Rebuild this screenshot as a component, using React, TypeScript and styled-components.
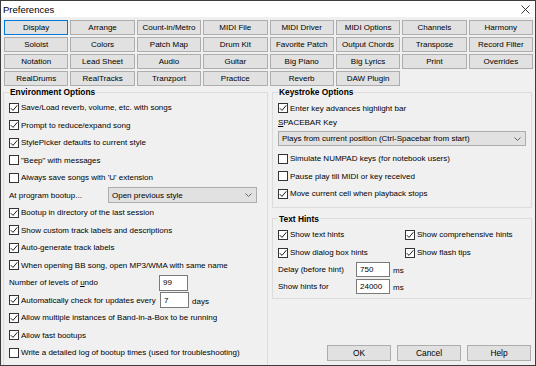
import React from "react";
import styled, { createGlobalStyle } from "styled-components";

const Global = createGlobalStyle`
  html, body { margin: 0; padding: 0; background: #ffffff; }
  body { font-family: "Liberation Sans", Arial, sans-serif; }
  * { box-sizing: border-box; }
`;

const Window = styled.div`
  width: 536px;
  height: 366px;
  border: 1px solid #3c3c3c;
  background: #f0f0f0;
  display: flex;
  flex-direction: column;
  overflow: hidden;
  font-size: 8px;
  color: #000;
`;

const TitleBar = styled.div`
  height: 16px;
  flex: none;
  background: #ffffff;
  display: flex;
  align-items: center;
  justify-content: space-between;
  padding: 0 5px 0 2px;
`;

const Title = styled.span`
  font-size: 9.5px;
`;

const Close = styled.svg`
  width: 9px;
  height: 9px;
  display: block;
`;

const TabGrid = styled.div`
  flex: none;
  margin-top: 3px;
  padding: 0 2px 0 3px;
  display: grid;
  grid-template-columns: repeat(8, 1fr);
  grid-auto-rows: 15px;
  gap: 2px;
`;

const TabButton = styled.div<{ $default?: boolean }>`
  background: #e1e1e1;
  border: 1px solid ${(p) => (p.$default ? "#0078d7" : "#adadad")};
  display: flex;
  align-items: center;
  justify-content: center;
  white-space: nowrap;
  font-size: 8px;
`;

const Main = styled.div`
  flex: 1;
  display: grid;
  grid-template-columns: 265px 260px;
  column-gap: 4px;
  padding: 1px 0 3px 2px;
  min-height: 0;
`;

const Column = styled.div`
  display: flex;
  flex-direction: column;
  min-height: 0;
`;

const Group = styled.fieldset<{ $gapBelow?: number }>`
  margin: 0 0 ${(p) => p.$gapBelow ?? 0}px 0;
  padding: 2px 4px 4px 5px;
  border: 1px solid #dcdcdc;
  min-width: 0;
`;

const GroupTitle = styled.legend`
  font-weight: bold;
  font-size: 8.4px;
  line-height: 10px;
  padding: 0 1px;
  margin-left: 0;
`;

const CheckRow = styled.div<{ $h?: number }>`
  height: ${(p) => p.$h ?? 17.5}px;
  display: flex;
  align-items: center;
  white-space: nowrap;
`;

const BoxWrap = styled.span<{ $checked?: boolean }>`
  width: 10px;
  height: 10px;
  flex: none;
  border: 1px solid #333333;
  background: #ffffff;
  margin-right: 2px;
  display: flex;
  align-items: center;
  justify-content: center;
`;

const FieldRow = styled.div<{ $h?: number; $mt?: number }>`
  height: ${(p) => p.$h ?? 17.5}px;
  margin-top: ${(p) => p.$mt ?? 0}px;
  display: flex;
  align-items: center;
  white-space: nowrap;
`;

const FixedLabel = styled.span<{ $w: number }>`
  width: ${(p) => p.$w}px;
  flex: none;
  display: flex;
  align-items: center;
  overflow: visible;
`;

const PlainLabel = styled.div<{ $h?: number; $mt?: number }>`
  height: ${(p) => p.$h ?? 10}px;
  margin-top: ${(p) => p.$mt ?? 0}px;
  display: flex;
  align-items: center;
`;

const Select = styled.div<{ $w?: number; $h?: number; $mt?: number }>`
  width: ${(p) => (p.$w ? `${p.$w}px` : "auto")};
  height: ${(p) => p.$h ?? 16}px;
  margin-top: ${(p) => p.$mt ?? 0}px;
  margin-right: 1px;
  background: #e1e1e1;
  border: 1px solid #adadad;
  display: flex;
  align-items: center;
  justify-content: space-between;
  padding: 0 4px 0 3px;
  white-space: nowrap;
  flex: none;
`;

const Chevron = styled.svg`
  width: 7px;
  height: 4px;
  display: block;
`;

const TextInput = styled.div<{ $w: number; $h?: number }>`
  width: ${(p) => p.$w}px;
  height: ${(p) => p.$h ?? 16}px;
  flex: none;
  background: #ffffff;
  border: 1px solid #7a7a7a;
  display: flex;
  align-items: center;
  padding-left: 3px;
`;

const Unit = styled.span`
  margin-left: 3px;
  padding-top: 2px;
`;

const HintGrid = styled.div`
  display: grid;
  grid-template-columns: 127px 1fr;
`;

const ButtonBar = styled.div`
  margin-top: auto;
  display: flex;
  justify-content: flex-end;
  gap: 6px;
  padding-right: 1px;
  margin-bottom: 1px;
`;

const DialogButton = styled.div`
  width: 64px;
  height: 16px;
  background: #e1e1e1;
  border: 1px solid #adadad;
  display: flex;
  align-items: center;
  justify-content: center;
  font-size: 8.4px;
`;

const tabs = [
  "Display", "Arrange", "Count-in/Metro", "MIDI File", "MIDI Driver", "MIDI Options", "Channels", "Harmony",
  "Soloist", "Colors", "Patch Map", "Drum Kit", "Favorite Patch", "Output Chords", "Transpose", "Record Filter",
  "Notation", "Lead Sheet", "Audio", "Guitar", "Big Piano", "Big Lyrics", "Print", "Overrides",
  "RealDrums", "RealTracks", "Tranzport", "Practice", "Reverb", "DAW Plugin",
];

function Box({ checked }: { checked?: boolean }) {
  return (
    <BoxWrap $checked={checked}>
      {checked && (
        <svg width="8" height="8" viewBox="0 0 8 8">
          <polyline points="0.8,4.2 3,6.4 7.3,1.3" fill="none" stroke="#1a1a1a" strokeWidth="1" />
        </svg>
      )}
    </BoxWrap>
  );
}

function Check({ checked, children, h }: { checked?: boolean; children: React.ReactNode; h?: number }) {
  return (
    <CheckRow $h={h}>
      <Box checked={checked} />
      <span>{children}</span>
    </CheckRow>
  );
}

function Down() {
  return (
    <Chevron viewBox="0 0 7 4">
      <polyline points="0.5,0.5 3.5,3.5 6.5,0.5" fill="none" stroke="#555" strokeWidth="0.9" />
    </Chevron>
  );
}

export default function App() {
  return (
    <>
      <Global />
      <Window>
        <TitleBar>
          <Title>Preferences</Title>
          <Close viewBox="0 0 9 9">
            <line x1="0.5" y1="0.5" x2="8.5" y2="8.5" stroke="#222" strokeWidth="0.9" />
            <line x1="8.5" y1="0.5" x2="0.5" y2="8.5" stroke="#222" strokeWidth="0.9" />
          </Close>
        </TitleBar>
        <TabGrid>
          {tabs.map((t, i) => (
            <TabButton key={t} $default={i === 0}>{t}</TabButton>
          ))}
        </TabGrid>
        <Main>
          <Column>
            <Group style={{ flex: 1 }}>
              <GroupTitle>Environment Options</GroupTitle>
              <Check checked>Save/Load reverb, volume, etc. with songs</Check>
              <Check checked>Prompt to reduce/expand song</Check>
              <Check checked>StylePicker defaults to current style</Check>
              <Check>"Beep" with messages</Check>
              <Check>Always save songs with 'U' extension</Check>
              <FieldRow>
                <FixedLabel $w={99}>At program bootup...</FixedLabel>
                <Select $w={149}>
                  <span>Open previous style</span>
                  <Down />
                </Select>
              </FieldRow>
              <Check checked>Bootup in directory of the last session</Check>
              <Check checked>Show custom track labels and descriptions</Check>
              <Check checked>Auto-generate track labels</Check>
              <Check checked>When opening BB song, open MP3/WMA with same name</Check>
              <FieldRow>
                <FixedLabel $w={150}>Number of levels of&nbsp;<u>u</u>ndo</FixedLabel>
                <TextInput $w={29}>99</TextInput>
              </FieldRow>
              <FieldRow>
                <FixedLabel $w={151}>
                  <Box checked />
                  <span>Automatically check for updates every</span>
                </FixedLabel>
                <TextInput $w={29}>7</TextInput>
                <Unit>days</Unit>
              </FieldRow>
              <Check checked>Allow multiple instances of Band-in-a-Box to be running</Check>
              <Check checked>Allow fast bootups</Check>
              <Check>Write a detailed log of bootup times (used for troubleshooting)</Check>
            </Group>
          </Column>
          <Column>
            <Group $gapBelow={6}>
              <GroupTitle>Keystroke Options</GroupTitle>
              <Check checked h={18}>Enter key advances highlight bar</Check>
              <PlainLabel>
                <span><u>S</u>PACEBAR Key</span>
              </PlainLabel>
              <Select $h={15} $mt={4}>
                <span>Plays from current position (Ctrl-Spacebar from start)</span>
                <Down />
              </Select>
              <div style={{ height: 4 }} />
              <Check>Simulate NUMPAD keys (for notebook users)</Check>
              <Check>Pause play till MIDI or key received</Check>
              <Check checked>Move current cell when playback stops</Check>
            </Group>
            <Group>
              <GroupTitle>Text Hints</GroupTitle>
              <HintGrid>
                <Check checked h={18}>Show text hints</Check>
                <Check checked h={18}>Show comprehensive hints</Check>
                <Check checked h={18}>Show dialog box hints</Check>
                <Check checked h={18}>Show flash tips</Check>
              </HintGrid>
              <FieldRow $h={15}>
                <FixedLabel $w={78}>Delay (before hint)</FixedLabel>
                <TextInput $w={34} $h={15}>750</TextInput>
                <Unit>ms</Unit>
              </FieldRow>
              <FieldRow $h={15} $mt={2}>
                <FixedLabel $w={78}>Show hints for</FixedLabel>
                <TextInput $w={34} $h={15}>24000</TextInput>
                <Unit>ms</Unit>
              </FieldRow>
            </Group>
            <ButtonBar>
              <DialogButton>OK</DialogButton>
              <DialogButton>Cancel</DialogButton>
              <DialogButton>Help</DialogButton>
            </ButtonBar>
          </Column>
        </Main>
      </Window>
    </>
  );
}
